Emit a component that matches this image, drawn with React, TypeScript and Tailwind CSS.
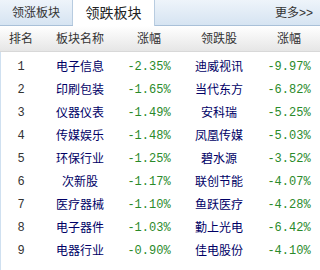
const rows = [
  { rank: 1, name: "电子信息", pct: "-2.35%", stock: "迪威视讯", stockPct: "-9.97%" },
  { rank: 2, name: "印刷包装", pct: "-1.65%", stock: "当代东方", stockPct: "-6.82%" },
  { rank: 3, name: "仪器仪表", pct: "-1.49%", stock: "安科瑞", stockPct: "-5.25%" },
  { rank: 4, name: "传媒娱乐", pct: "-1.48%", stock: "凤凰传媒", stockPct: "-5.03%" },
  { rank: 5, name: "环保行业", pct: "-1.25%", stock: "碧水源", stockPct: "-3.52%" },
  { rank: 6, name: "次新股", pct: "-1.17%", stock: "联创节能", stockPct: "-4.07%" },
  { rank: 7, name: "医疗器械", pct: "-1.10%", stock: "鱼跃医疗", stockPct: "-4.28%" },
  { rank: 8, name: "电子器件", pct: "-1.03%", stock: "勤上光电", stockPct: "-6.42%" },
  { rank: 9, name: "电器行业", pct: "-0.90%", stock: "佳电股份", stockPct: "-4.10%" },
];

const cjk = "font-['Liberation_Sans','Noto_Sans_CJK_SC',sans-serif]";
const mono = "font-['Liberation_Mono','Noto_Sans_CJK_SC',monospace]";
const cols = "grid grid-cols-[42px_76px_62px_78px_62px]";

export default function App() {
  return (
    <div className={`w-[320px] h-[270px] bg-white overflow-hidden ${cjk}`}>
      {/* Tabs */}
      <div className="flex h-[26px] bg-gradient-to-b from-[#eef4fa] to-[#d6e4f2] border-b border-[#a9c0d8]">
        <div className="w-[73px] flex items-center justify-center text-[12px] text-[#333] border-r border-[#b8cce0]">
          领涨板块
        </div>
        <div className="w-[82px] -mb-px flex items-center justify-center text-[14px] text-[#222] bg-white border-r border-[#b8cce0]">
          领跌板块
        </div>
        <div className="flex-1 flex items-center justify-end pr-[7px] text-[12px] text-[#333]">
          更多&gt;&gt;
        </div>
      </div>

      {/* Header */}
      <div className={`${cols} h-[26px] items-center text-[12px] text-[#333] bg-gradient-to-b from-white to-[#e6e6e6] border-b border-[#d8d8d8]`}>
        <div className="text-center">排名</div>
        <div className="text-center">板块名称</div>
        <div className="text-center">涨幅</div>
        <div className="text-center">领跌股</div>
        <div className="text-center">涨幅</div>
      </div>

      {/* Rows */}
      <div className="border-l border-[#cfe0f0] h-full pt-[3px]">
        {rows.map((r) => (
          <div key={r.rank} className={`${cols} h-[23px] items-center -ml-px`}>
            <div className={`text-center text-[12px] text-[#333] ${mono}`}>{r.rank}</div>
            <div className="text-center text-[12px] text-[#000066]">{r.name}</div>
            <div className={`text-center text-[12px] text-[#2a8a2a] ${mono}`}>{r.pct}</div>
            <div className="text-center text-[12px] text-[#000066]">{r.stock}</div>
            <div className={`text-center text-[12px] text-[#2a8a2a] ${mono}`}>{r.stockPct}</div>
          </div>
        ))}
      </div>
    </div>
  );
}
